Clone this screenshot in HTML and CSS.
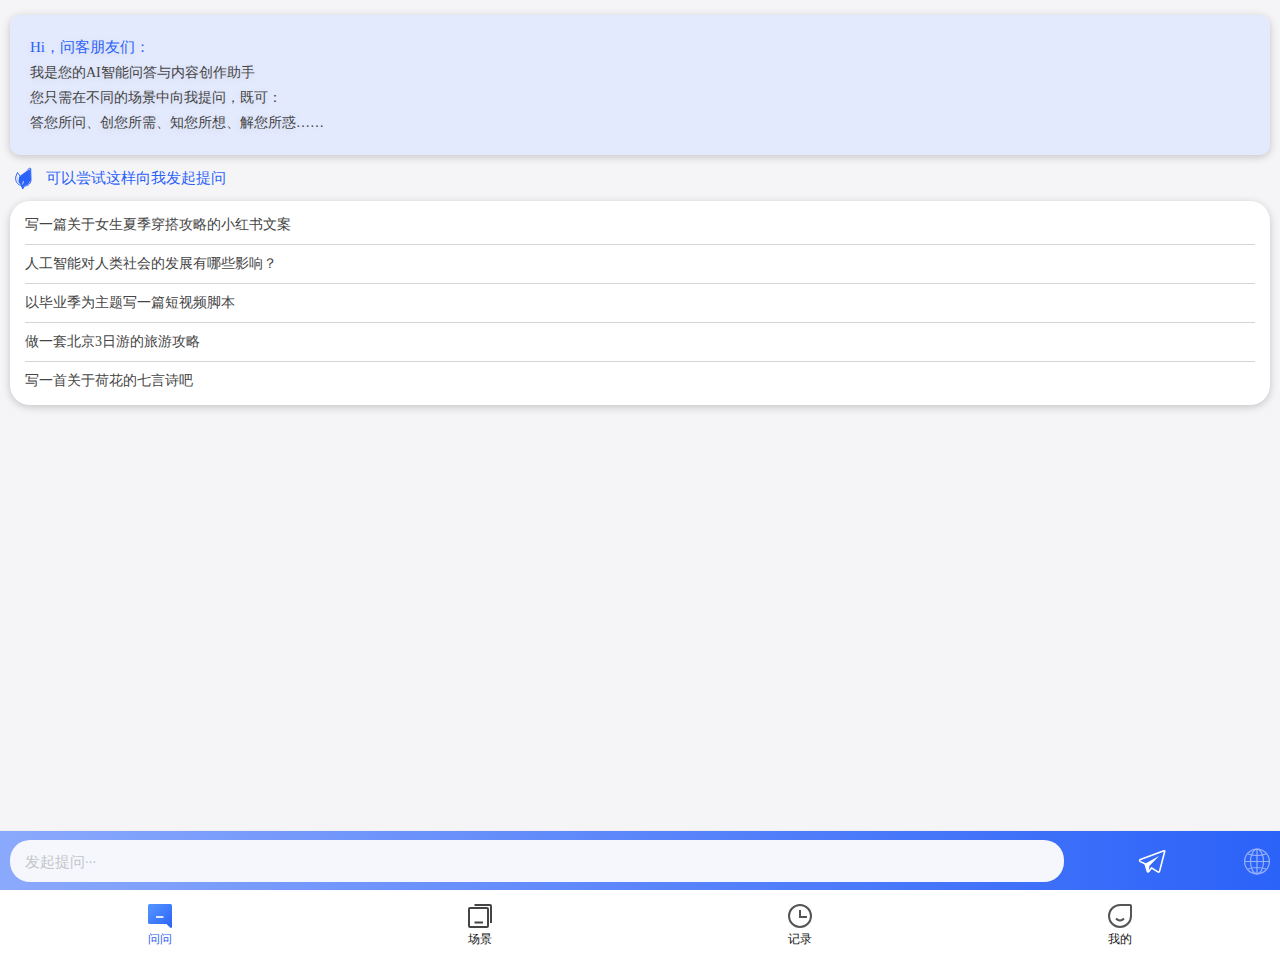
FILE: index.html
```html
<!DOCTYPE html>
<html>
<head>
  <meta charset="UTF-8">
  <meta name="viewport" content="width=device-width, initial-scale=1.0">
  <title>问问</title>
  <link rel="stylesheet" href="styles.css">
</head>
<body>
  <main class="content">
    <section class="intro">
      <h1>Hi，问客朋友们：</h1>
      <p>我是您的AI智能问答与内容创作助手</p>
      <p>您只需在不同的场景中向我提问，既可：</p>
      <p>答您所问、创您所需、知您所想、解您所惑……</p>
    </section>

    <div class="try-title">
      <svg class="leaf" viewBox="0 0 18 24" width="18" height="24" aria-hidden="true">
        <path d="M15.500 3L11 5.500 5.500 9.500 4 11l-.5 5L6 19.500l1.500 3.500 1.500-3 4-1.500 3-4.500z" fill="#2b62f8"/>
        <path d="M12 4.500l2.500-2.500 1.200.5.300 12c-.8 4-3.500 5.500-6.500 5.500L7.700 23l-1-3.300C2.700 19 .2 15.500.7 11L2.500 6.500 5 10" fill="none" stroke="#2b62f8" stroke-width="1"/>
        <path d="M7.500 18.500l1-3.500M2.700 10.500c-1 4 0 6.500 2 8" fill="none" stroke="#c9d6fd" stroke-width="1"/>
      </svg>
      <h2>可以尝试这样向我发起提问</h2>
    </div>

    <ul class="question-list">
      <li><button type="button">写一篇关于女生夏季穿搭攻略的小红书文案</button></li>
      <li><button type="button">人工智能对人类社会的发展有哪些影响？</button></li>
      <li><button type="button">以毕业季为主题写一篇短视频脚本</button></li>
      <li><button type="button">做一套北京3日游的旅游攻略</button></li>
      <li><button type="button">写一首关于荷花的七言诗吧</button></li>
    </ul>
  </main>

  <footer class="bottom">
    <form class="ask-bar">
      <input type="text" class="ask-input" placeholder="发起提问∙∙∙" aria-label="发起提问">
      <button type="button" class="send-btn" aria-label="发送">
        <svg viewBox="0 0 28 24" width="28" height="24" aria-hidden="true">
          <path d="M26 1.700L2.300 10.500c-1 .5-1 1.600 0 2.100l4.700 2.200 2.300 7.400c.3.900 1 .9 1.500.2l2.700-3.500 6.300 4c.9.500 1.600.2 1.800-.8L26.700 2.500q.2-.9-.7-.8z" fill="none" stroke="#fff" stroke-width="1.600" stroke-linejoin="round"/>
          <path d="M21 7L7 14.800l2.600 7.400 1 .2.800-5.500z" fill="#fff"/>
        </svg>
      </button>
      <button type="button" class="web-btn" aria-label="联网">
        <svg viewBox="0 0 26 28" width="26" height="28" fill="none" stroke="#fff" stroke-width="1.200" aria-hidden="true">
          <circle cx="13" cy="14.500" r="12.400"/>
          <ellipse cx="13" cy="14.500" rx="6.500" ry="12.400"/>
          <path d="M13 2v25M.5 14.500h25M4 7q9 3 18 0M4 22q9-3 18 0"/>
        </svg>
      </button>
    </form>

    <nav class="tabs">
      <a href="#ask" class="tab active">
        <svg viewBox="0 0 24 24" width="24" height="24" aria-hidden="true">
          <defs>
            <linearGradient id="askFill" x1="0" y1="0" x2="1" y2="1">
              <stop offset="0" stop-color="#5597ff"/>
              <stop offset="1" stop-color="#2b62f8"/>
            </linearGradient>
          </defs>
          <path d="M1.500 0h21A1.500 1.500 0 0 1 24 1.500V23q-.5 1.500-2 .6L18.500 20h-17A1.500 1.500 0 0 1 0 18.500v-17A1.500 1.500 0 0 1 1.500 0z" fill="url(#askFill)"/>
          <path d="M8 13h7.500" stroke="#dfe9ff" stroke-width="2"/>
        </svg>
        <span>问问</span>
      </a>
      <a href="#scene" class="tab">
        <svg viewBox="0 0 24 24" width="24" height="24" fill="none" stroke="#444" stroke-width="2" aria-hidden="true">
          <rect x="1" y="4" width="19" height="19" rx="1"/>
          <path d="M6.500 1H22q1 0 1 1v17M6.500 18.500H15"/>
        </svg>
        <span>场景</span>
      </a>
      <a href="#history" class="tab">
        <svg viewBox="0 0 24 24" width="24" height="24" fill="none" stroke="#555" stroke-width="2" aria-hidden="true">
          <circle cx="12" cy="12" r="11"/>
          <path d="M12 6v7h7"/>
        </svg>
        <span>记录</span>
      </a>
      <a href="#mine" class="tab">
        <svg viewBox="0 0 24 24" width="24" height="24" fill="none" stroke="#555" stroke-width="2" aria-hidden="true">
          <path d="M12 1h10q1 0 1 1v10A11 11 0 1 1 12 1z"/>
          <path d="M8 14.500q4 4 8 0"/>
        </svg>
        <span>我的</span>
      </a>
    </nav>
  </footer>
</body>
</html>
```
FILE: styles.css
```css
* {
  box-sizing: border-box;
}

body {
  margin: 0;
  min-height: 100vh;
  display: flex;
  flex-direction: column;
  background: #f5f5f8;
  color: #444;
  font-family: "Liberation Serif", serif;
  font-size: 14px;
}

button,
input {
  font-family: inherit;
  border: none;
}

button {
  background: none;
  padding: 0;
  color: inherit;
  cursor: pointer;
}

svg {
  display: block;
}

.content {
  flex: 1;
  padding: 15px 10px;
}

/* intro card */
.intro {
  padding: 20px;
  background: #e4eafe;
  border-radius: 10px;
  box-shadow: 0 2px 8px rgba(0, 0, 0, 0.2);
  line-height: 25px;
  text-shadow: 0 2px 8px rgba(0, 0, 0, 0.1);
}

.intro h1,
.intro p {
  margin: 0;
}

.intro h1 {
  color: #2b62f8;
  font-size: 15px;
  font-weight: normal;
}

/* question suggestions */
.try-title {
  display: flex;
  align-items: center;
  gap: 13px;
  height: 46px;
  padding-left: 5px;
  color: #2b62f8;
}

.try-title h2 {
  margin: 0;
  font-size: 15px;
  font-weight: normal;
}

.question-list {
  margin: 0;
  padding: 5px 15px;
  list-style: none;
  background: #fff;
  border-radius: 20px;
  box-shadow: 0 2px 8px rgba(0, 0, 0, 0.2);
}

.question-list li + li {
  border-top: 1px solid #d5d5d5;
}

.question-list button {
  display: block;
  width: 100%;
  font-size: 14px;
  line-height: 38px;
  text-align: left;
}

/* stays at the bottom of the window */
.bottom {
  position: sticky;
  bottom: 0;
}

.ask-bar {
  display: grid;
  grid-template-columns: 6fr 1fr 30px;
  align-items: center;
  height: 60px;
  padding: 0 10px;
  border-top: 1px solid #eee;
  background: linear-gradient(to right, #8ba9fc, #2b62f8);
}

.ask-input {
  min-width: 0;
  height: 42px;
  padding: 3px 15px 0;
  border-radius: 20px;
  background: #f5f7fc;
  font-size: 15px;
}

.ask-input::placeholder {
  color: #c3c5ca;
}

.send-btn {
  display: flex;
  justify-content: center;
}

.web-btn {
  display: flex;
  justify-content: flex-end;
  opacity: 0.5;
}

/* tab bar */
.tabs {
  display: flex;
  height: 70px;
  background: #fff;
}

.tab {
  flex: 1;
  display: flex;
  flex-direction: column;
  align-items: center;
  gap: 3px;
  padding-top: 14px;
  color: #111;
  font-size: 12px;
  line-height: 16px;
  text-decoration: none;
}

.tab.active {
  color: #2b62f8;
}
```
